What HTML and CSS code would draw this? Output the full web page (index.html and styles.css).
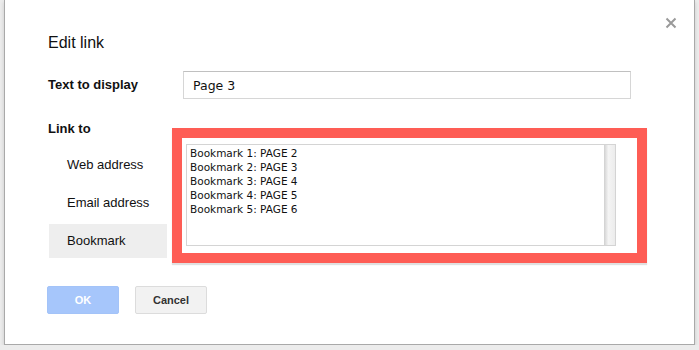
FILE: index.html
```html
<!DOCTYPE html>
<html lang="en">
<head>
    <meta charset="UTF-8">
    <title>Edit link</title>
    <link rel="stylesheet" href="styles.css">
</head>
<body>
    <div class="dialog">
        <button class="close" aria-label="Close">
            <svg width="12" height="12" viewBox="0 0 12 12">
                <path d="M1.5 1.5 L10.5 10.5 M10.5 1.5 L1.5 10.5" stroke="#9a9a9a" stroke-width="2"/>
            </svg>
        </button>
        <h1 class="title">Edit link</h1>

        <div class="row">
            <label class="label label-wide" for="text">Text to display</label>
            <input class="text-input" id="text" type="text" value="Page 3">
        </div>

        <div class="link-row">
            <div class="link-left">
                <div class="label">Link to</div>
                <ul class="tabs">
                    <li class="tab">Web address</li>
                    <li class="tab">Email address</li>
                    <li class="tab selected">Bookmark</li>
                </ul>
            </div>
            <div class="highlight">
                <div class="listbox">
                    <ul class="options">
                        <li>Bookmark 1: PAGE 2</li>
                        <li>Bookmark 2: PAGE 3</li>
                        <li>Bookmark 3: PAGE 4</li>
                        <li>Bookmark 4: PAGE 5</li>
                        <li>Bookmark 5: PAGE 6</li>
                    </ul>
                    <div class="scrollbar"></div>
                </div>
            </div>
        </div>

        <div class="buttons">
            <button class="btn btn-ok">OK</button>
            <button class="btn btn-cancel">Cancel</button>
        </div>
    </div>
</body>
</html>
```

FILE: styles.css
```css
/* Page */
body {
    margin: 0;
    padding: 0 4px 0 4px;
    background: #ececec;
    font-family: 'Liberation Sans', Arial, sans-serif;
    color: #222;
}

/* Dialog */
.dialog {
    position: relative;
    background: white;
    border: 1px solid #a9a9a9;
    border-top: none;
    box-shadow: 0 2px 4px rgba(0,0,0,0.15);
    height: 345px;
    box-sizing: border-box;
    padding: 34px 0 0 43px;
}

.close {
    position: absolute;
    top: 17px;
    right: 17px;
    width: 12px;
    height: 12px;
    padding: 0;
    border: none;
    background: none;
    display: flex;
}

.title {
    margin: 0;
    font-size: 16px;
    font-weight: normal;
    line-height: 18px;
    color: #111;
}

/* Text to display */
.row {
    display: flex;
    align-items: center;
    margin-top: 19px;
}

.label {
    font-weight: bold;
    font-size: 13px;
    color: #111;
    line-height: 16px;
}

.label-wide {
    width: 135px;
}

.text-input {
    width: 448px;
    height: 28px;
    box-sizing: border-box;
    border: 1px solid #d6d6d6;
    border-top-color: #c0c0c0;
    padding: 0 9px;
    font-family: 'DejaVu Sans', sans-serif;
    font-size: 12.5px;
    color: #111;
    outline: none;
}

/* Link to */
.link-row {
    display: flex;
    margin-top: 21px;
}

.link-left {
    width: 124px;
    padding-top: 1px;
}

.tabs {
    list-style: none;
    margin: 11px 0 0 1px;
    padding: 0;
    width: 118px;
    display: flex;
    flex-direction: column;
    gap: 4px;
}

.tab {
    height: 34px;
    line-height: 34px;
    padding-left: 18px;
    font-size: 13px;
    color: #111;
}

.tab.selected {
    background: #eeeeee;
}

/* Red annotation box */
.highlight {
    margin-top: 8px;
    width: 475px;
    height: 135px;
    box-sizing: border-box;
    border: 10px solid #fe5d55;
    box-shadow: 0 2px 1px rgba(0,0,0,0.12);
    padding: 6px 0 0 4px;
    background: white;
}

.listbox {
    display: flex;
    width: 430px;
    height: 102px;
    box-sizing: border-box;
    border: 1px solid #d4d4d4;
}

.options {
    flex: 1;
    list-style: none;
    margin: 0;
    padding: 1px 3px;
    font-family: 'DejaVu Sans', sans-serif;
    font-size: 10.5px;
    line-height: 14px;
    color: #111;
}

.scrollbar {
    width: 11px;
    background: linear-gradient(to right, #d0d0d0, #f4f4f4 40%, #ececec);
}

/* Buttons */
.buttons {
    display: flex;
    gap: 16px;
    margin-top: 23px;
    margin-left: -1px;
}

.btn {
    height: 28px;
    border-radius: 2px;
    font-family: 'Liberation Sans', Arial, sans-serif;
    font-weight: bold;
    font-size: 11px;
    padding: 0;
}

.btn-ok {
    width: 72px;
    background: #a6c6fb;
    border: 1px solid #a3c3f8;
    color: white;
}

.btn-cancel {
    width: 72px;
    background: #f2f2f2;
    border: 1px solid #dcdcdc;
    color: #333;
}
```
